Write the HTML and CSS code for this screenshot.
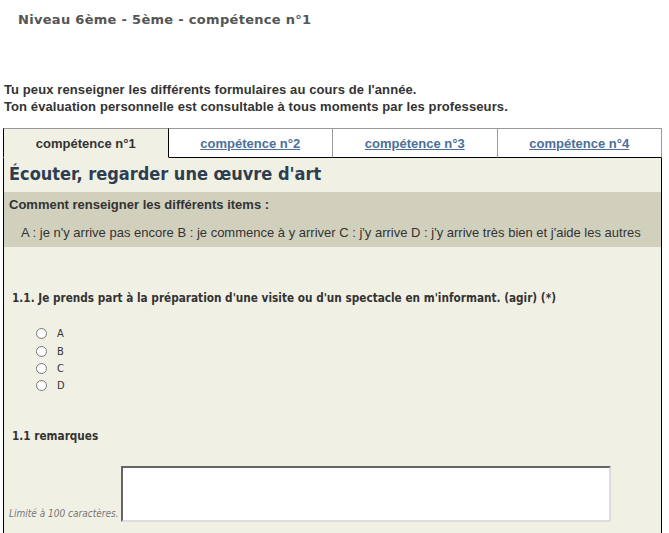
FILE: index.html
```html
<!DOCTYPE html>
<html>
<head>
    <meta charset="utf-8">
    <link rel="stylesheet" href="styles.css">
</head>
<body>
    <h1 class="page-title">Niveau 6ème - 5ème - compétence n°1</h1>

    <p class="intro">Tu peux renseigner les différents formulaires au cours de l'année.<br>
    Ton évaluation personnelle est consultable à tous moments par les professeurs.</p>

    <div class="tabs">
        <div class="tab active">compétence n°1</div>
        <div class="tab"><a href="#">compétence n°2</a></div>
        <div class="tab"><a href="#">compétence n°3</a></div>
        <div class="tab"><a href="#">compétence n°4</a></div>
    </div>

    <div class="panel">
        <h2>Écouter, regarder une œuvre d'art</h2>

        <div class="help">
            <p class="help-title">Comment renseigner les différents items :</p>
            <p class="help-text">A : je n'y arrive pas encore B : je commence à y arriver C : j'y arrive D : j'y arrive très bien et j'aide les autres</p>
        </div>

        <p class="question">1.1. Je prends part à la préparation d'une visite ou d'un spectacle en m'informant. (agir) (*)</p>

        <div class="choices">
            <label><input type="radio" name="q11"> A</label>
            <label><input type="radio" name="q11"> B</label>
            <label><input type="radio" name="q11"> C</label>
            <label><input type="radio" name="q11"> D</label>
        </div>

        <p class="question">1.1 remarques</p>

        <div class="remark">
            <span class="limit">Limité à 100 caractères.</span>
            <textarea></textarea>
        </div>
    </div>
</body>
</html>
```

FILE: styles.css
```css
body {
    margin: 0;
    padding: 0 7px 0 3px;
    font-family: "Liberation Sans", Arial, sans-serif;
    background-color: #fff;
    color: #333;
}

.page-title {
    margin: 0;
    padding: 12px 0 0 15px;
    font-family: "DejaVu Sans", sans-serif;
    font-size: 13px;
    font-weight: bold;
    letter-spacing: 0.3px;
    color: #555;
}

.intro {
    margin: 54px 0 0 1px;
    font-size: 13px;
    font-weight: bold;
    line-height: 17px;
    letter-spacing: 0.1px;
    color: #333;
}

/* Tabs */
.tabs {
    display: flex;
    margin-top: 13px;
}

.tab {
    flex: 1;
    height: 28px;
    line-height: 30px;
    text-align: center;
    font-size: 13px;
    font-weight: bold;
    background-color: #fff;
    border-top: 1px solid #999;
    border-right: 1px solid #999;
    border-bottom: 1px solid #000;
}

.tab:first-child {
    border-left: 1px solid #000;
}

.tab.active {
    background-color: #f1f0e5;
    border-bottom-color: #f1f0e5;
    border-right-color: #000;
    color: #333;
}

.tab a {
    color: #4d6f99;
}

/* Panel */
.panel {
    background-color: #f1f0e5;
    border-left: 1px solid #000;
    border-right: 1px solid #000;
    padding-bottom: 20px;
}

.panel h2 {
    margin: 0;
    padding: 5px 0 0 5px;
    height: 29px;
    font-family: "DejaVu Sans Condensed", "DejaVu Sans", sans-serif;
    font-size: 18px;
    font-weight: bold;
    color: #2d3e50;
}

.help {
    background-color: #d1d0bd;
    padding: 5px 5px 7px;
    font-size: 13px;
}

.help p {
    margin: 0;
}

.help-title {
    font-weight: bold;
}

.help-text {
    padding: 13px 0 0 12px;
}

.question {
    margin: 44px 0 0 8px;
    font-family: "DejaVu Sans Condensed", "DejaVu Sans", sans-serif;
    font-size: 11.7px;
    font-weight: bold;
    color: #333;
}

.choices {
    display: flex;
    flex-direction: column;
    padding: 20px 0 0 32px;
    font-family: "DejaVu Sans Condensed", "DejaVu Sans", sans-serif;
    font-size: 11px;
}

.choices label {
    display: flex;
    align-items: center;
    height: 17.4px;
}

.choices input {
    margin: 0 10px 0 0;
    width: 11px;
    height: 11px;
}

.choices + .question {
    margin-top: 34px;
}

.remark {
    display: flex;
    align-items: flex-end;
    padding: 23px 0 0 5px;
}

.limit {
    font-family: "DejaVu Sans Condensed", "DejaVu Sans", sans-serif;
    font-size: 10px;
    font-style: italic;
    color: #777;
    padding: 0 2px 3px 0;
}

.remark textarea {
    width: 484px;
    height: 50px;
    margin: 0;
    padding: 1px;
    border: 2px solid;
    border-color: #666 #ddd #ddd #666;
    background-color: #fff;
    resize: none;
}
```
